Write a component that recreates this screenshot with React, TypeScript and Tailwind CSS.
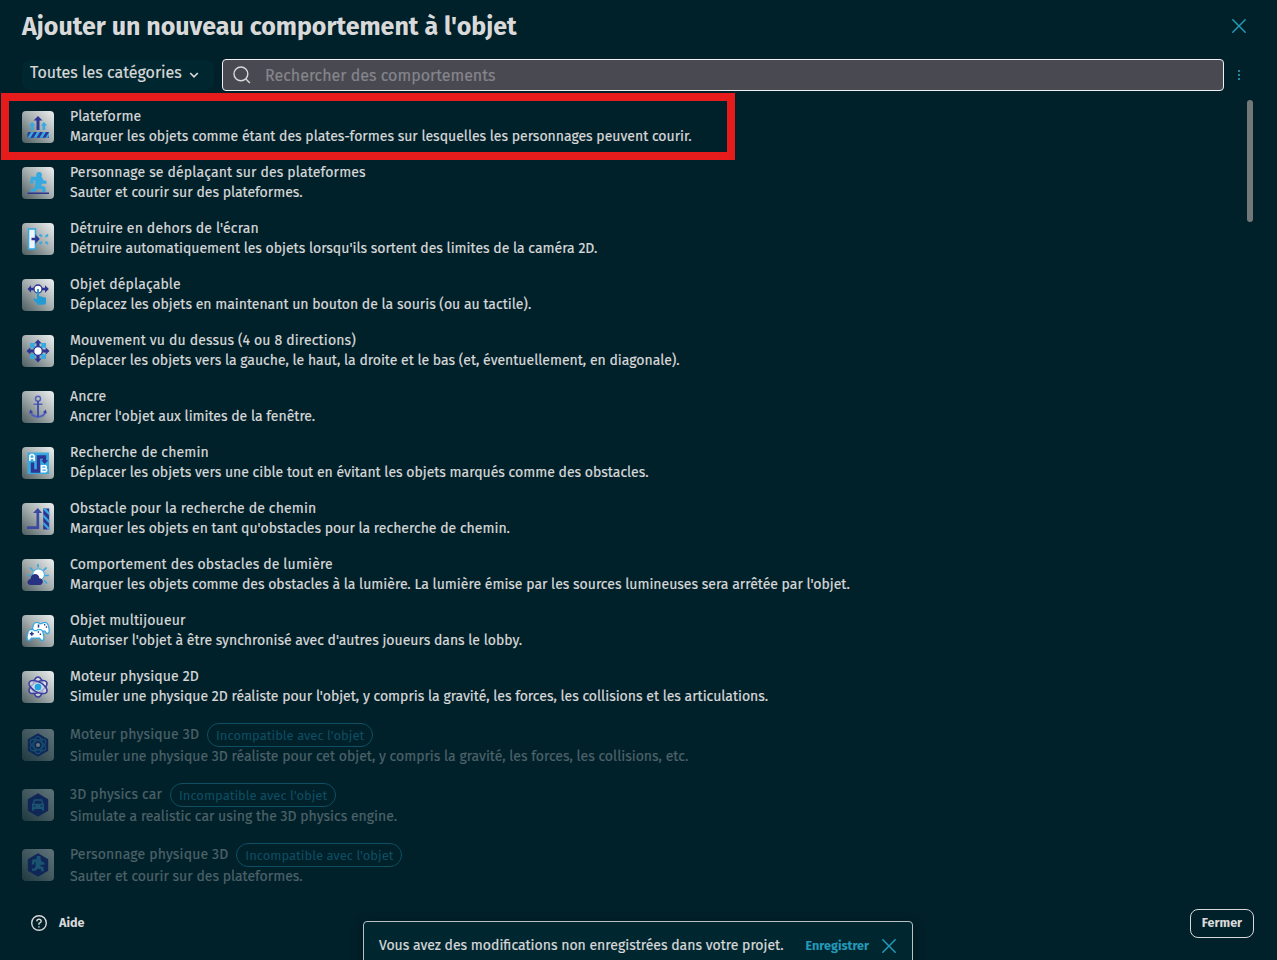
import type { ReactNode } from 'react';

const NAVY = '#2c3594';
const SKY = '#36a9e1';

type Behavior = {
  title: string;
  description: string;
  icon: ReactNode;
  incompatible?: boolean;
};

const platformIcon = (
  <>
    <path d="M14.500 19V9.500h-3L16 5l4.500 4.500h-3V19z" fill={NAVY} />
    <path d="M8.800 19v-4.500H6.800L10.200 11l3 3.500h-1.600V19zM20.500 19v-4.500h-1.600l3-3.500 3.300 3.500h-2V19z" fill={SKY} />
    <rect x="5.500" y="21" width="21.500" height="5.800" fill={NAVY} />
    <path d="M9 21h3l-3.500 5.800h-3zM15 21h3l-3.500 5.800h-3zM21 21h3l-3.500 5.800h-3zM27 21v4l-1 1.800h-2.500zM5.500 21h1l-1 2z" fill={SKY} />
  </>
);

const runner = (
  <>
    <circle cx="17" cy="8" r="2.900" />
    <path d="M9 9.700h10.500l2 3.500 3 .8v2.700h-4.700l-.5 2 4.200 1.300v5.300h-3.200v-2.700l-4.800-.600-2.500 2.700H8.500v-3H12l1.200-3.200v-5l-1.700-.3v3.200H8z" />
  </>
);

const characterIcon = (
  <>
    <g fill={SKY}>{runner}</g>
    <path d="M5.500 26.300h21.500" stroke={NAVY} strokeWidth="1.500" />
  </>
);

const destroyOutsideIcon = (
  <>
    <rect x="6.500" y="6" width="7" height="20" fill="#f2f3f6" stroke={SKY} strokeWidth="1.600" />
    <path d="M9.500 14.800h3.800v-3.500l4.400 4.700-4.400 4.700v-3.500H9.500z" fill={NAVY} />
    <path d="M17.500 11.500l2.500 2M17.500 21l2.500-2.200M26 11.500L23.500 14M26 21l-2.500-2.300" stroke={SKY} strokeWidth="2" />
  </>
);

const draggableIcon = (
  <>
    <path d="M5.500 10L9 6.200v2.500h14V6.200l3.800 3.800L23 13.800v-2.500H9v2.500z" fill={NAVY} />
    <circle cx="16" cy="10" r="4" fill="#fff" stroke={NAVY} strokeWidth="1.300" />
    <path d="M15 10.500q1-1.500 2 0V17l7 1.700v5.500l-1.500 1.600H16l-4.500-5v-1.600l3.500 1z" fill="#259bd3" />
  </>
);

const topDownIcon = (
  <>
    <path d="M8 8h6l-1.900 1.900 10 10L24 18v6h-6l1.900-1.900-10-10L8 14zM24 8v6l-1.900-1.900-10 10L14 24H8v-6l1.900 1.900 10-10L18 8z" fill={SKY} />
    <path d="M16 4.500l3.500 3.700h-2v6.300h6.300v-2l3.700 3.500-3.700 3.500v-2h-6.300v6.300h2L16 27.500l-3.500-3.700h2v-6.300H8.200v2L4.500 16l3.700-3.500v2h6.300V8.200h-2z" fill={NAVY} />
    <circle cx="16" cy="16" r="4.300" fill="#fff" stroke={NAVY} strokeWidth="1.300" />
  </>
);

const anchorIcon = (
  <>
    <g fill="none" stroke="#5360bd" strokeWidth="1.400">
      <circle cx="16" cy="7.800" r="2.500" />
      <path d="M11.500 13.200h9" />
      <path d="M8.700 21q.800 4.300 7.300 5 6.500-.700 7.300-5" strokeWidth="1.900" />
    </g>
    <path d="M15.100 10.300h1.800V26h-1.800z" fill="#3b4ca9" />
    <path d="M7.200 22.500l1-4 3 2.800zM24.800 22.500l-1-4-3 2.800z" fill="#3742a0" />
  </>
);

const pathfindingIcon = (
  <>
    <rect x="5.500" y="5.500" width="21.500" height="21.500" fill={SKY} />
    <path d="M10.500 15.500v8.500h6V10h6v4" fill="none" stroke={NAVY} strokeWidth="3.400" />
    <path d="M19 13.300h7.300L22.700 17z" fill={NAVY} />
    <path d="M7.800 14V9l1.200-1.500h2L12.200 9v5M8 11.500h4" fill="none" stroke="#fff" strokeWidth="1.600" />
    <path d="M19.500 18.800h3.800l.9.900v1l-.9.900h-3.100 3.400l1 .9v1.200l-1 .9h-4.100z" fill="none" stroke="#fff" strokeWidth="1.600" />
  </>
);

const obstacleIcon = (
  <>
    <path d="M5 24.700h10.800V8.500" fill="none" stroke="#3b49a0" strokeWidth="2.700" />
    <path d="M11 10l4.800-5 4.300 5z" fill="#3b49a0" />
    <rect x="21.200" y="5.500" width="6" height="21" fill={NAVY} />
    <path d="M21.200 5.500h2.500l3.500 3.700v3.200l-6-6zM21.200 11l6 6.200v3.200l-6-6.200zM21.200 18.500l6 6.100v1.900h-1.200l-4.800-5z" fill={SKY} />
  </>
);

const lightIcon = (
  <>
    <path d="M16 5v3.500M8 8.500l3 3M24.500 8.500l-3 3M5.500 16.500H9M23 16.500h4M22 21.500l3 3" stroke={SKY} strokeWidth="1.700" />
    <circle cx="16.500" cy="15.800" r="5.900" fill="#fff" stroke={SKY} strokeWidth="1" />
    <path d="M8 26q-3-.7-2.500-3.500Q6 20 8.500 20q.3-4.500 4.300-5 4.400.2 4.500 4.200 3.500.3 3.500 3.300 0 3.200-3.300 3.500z" fill="#293282" />
  </>
);

const gamepad = (
  <path
    d="M4.300 1.300h3l1 1h2.400l1-1h3Q16.500 1.500 17.500 6q1 5-.5 6-2 .8-3.500-2.200h-8Q4 12.800 2 12 .5 11 1.500 6 2.500 1.500 4.300 1.300z"
    fill="#fff"
    stroke={SKY}
    strokeWidth="1.300"
  />
);

const multiplayerIcon = (
  <>
    <g transform="translate(9.300 6.300)">{gamepad}</g>
    <path d="M16.500 9.500v3M22 9.800h1.300M23.800 12h1.300" stroke={NAVY} strokeWidth="1.500" />
    <g transform="translate(4 13.300)">{gamepad}</g>
    <path d="M9.800 16.700v4M7.800 18.700h4" stroke={NAVY} strokeWidth="1.500" />
    <path d="M15.700 17h1.400M17.700 19.200h1.400" stroke={NAVY} strokeWidth="1.500" />
  </>
);

const physicsIcon = (
  <>
    <g fill="#eef0f8" fillOpacity=".6" stroke="#3c3f9c" strokeWidth="1.500">
      <ellipse cx="16" cy="16" rx="5" ry="10" />
      <ellipse cx="16" cy="16" rx="5" ry="10" transform="rotate(60 16 16)" />
      <ellipse cx="16" cy="16" rx="5" ry="10" transform="rotate(120 16 16)" />
    </g>
    <circle cx="16" cy="16" r="3.500" fill="#22a5dd" />
  </>
);

const hexagon = <path d="M16 4.300l10.200 5.900v11.600L16 27.700 5.800 21.800V10.200z" fill="#24329b" />;

const physics3dIcon = (
  <>
    {hexagon}
    <g fill="none" stroke="#398fd0" strokeWidth="1.300">
      <ellipse cx="16" cy="16" rx="4.300" ry="8.700" />
      <ellipse cx="16" cy="16" rx="4.300" ry="8.700" transform="rotate(60 16 16)" />
      <ellipse cx="16" cy="16" rx="4.300" ry="8.700" transform="rotate(120 16 16)" />
    </g>
    <circle cx="16" cy="16" r="2" fill="#fff" />
  </>
);

const carIcon = (
  <>
    {hexagon}
    <path d="M12 10.300h8l1.200 4.200h.8v7h-2.200v-1.500h-7.600v1.500H10v-7h.8zM13 11.800l-.8 2.900h7.600l-.8-2.900zM11.500 16.500v1.200h2v-1.200zM18.500 16.500v1.200h2v-1.200z" fill="#459fdb" fillRule="evenodd" />
  </>
);

const character3dIcon = (
  <>
    {hexagon}
    <g fill="#459fdb" transform="translate(3.500 2.800) scale(.77)">{runner}</g>
  </>
);

const behaviors: Behavior[] = [
  { title: 'Plateforme', description: 'Marquer les objets comme étant des plates-formes sur lesquelles les personnages peuvent courir.', icon: platformIcon },
  { title: 'Personnage se déplaçant sur des plateformes', description: 'Sauter et courir sur des plateformes.', icon: characterIcon },
  { title: "Détruire en dehors de l'écran", description: "Détruire automatiquement les objets lorsqu'ils sortent des limites de la caméra 2D.", icon: destroyOutsideIcon },
  { title: 'Objet déplaçable', description: 'Déplacez les objets en maintenant un bouton de la souris (ou au tactile).', icon: draggableIcon },
  { title: 'Mouvement vu du dessus (4 ou 8 directions)', description: 'Déplacer les objets vers la gauche, le haut, la droite et le bas (et, éventuellement, en diagonale).', icon: topDownIcon },
  { title: 'Ancre', description: "Ancrer l'objet aux limites de la fenêtre.", icon: anchorIcon },
  { title: 'Recherche de chemin', description: 'Déplacer les objets vers une cible tout en évitant les objets marqués comme des obstacles.', icon: pathfindingIcon },
  { title: 'Obstacle pour la recherche de chemin', description: "Marquer les objets en tant qu'obstacles pour la recherche de chemin.", icon: obstacleIcon },
  { title: 'Comportement des obstacles de lumière', description: "Marquer les objets comme des obstacles à la lumière. La lumière émise par les sources lumineuses sera arrêtée par l'objet.", icon: lightIcon },
  { title: 'Objet multijoueur', description: "Autoriser l'objet à être synchronisé avec d'autres joueurs dans le lobby.", icon: multiplayerIcon },
  { title: 'Moteur physique 2D', description: "Simuler une physique 2D réaliste pour l'objet, y compris la gravité, les forces, les collisions et les articulations.", icon: physicsIcon },
  { title: 'Moteur physique 3D', description: 'Simuler une physique 3D réaliste pour cet objet, y compris la gravité, les forces, les collisions, etc.', icon: physics3dIcon, incompatible: true },
  { title: '3D physics car', description: 'Simulate a realistic car using the 3D physics engine.', icon: carIcon, incompatible: true },
  { title: 'Personnage physique 3D', description: 'Sauter et courir sur des plateformes.', icon: character3dIcon, incompatible: true },
];

function BehaviorRow({ title, description, icon, incompatible }: Behavior) {
  return (
    <li className="flex shrink-0 items-center gap-4 py-2">
      <div
        className={`size-8 shrink-0 overflow-hidden rounded-[4px] bg-linear-to-bl from-[#eef0f0] via-[#a5adae] to-[#4d5d60] ${incompatible ? 'opacity-40' : ''}`}
      >
        <svg viewBox="0 0 32 32" className="size-8">{icon}</svg>
      </div>
      <div className={`text-sm leading-5 whitespace-nowrap [-webkit-text-stroke:0.2px] ${incompatible ? 'text-[#4d6269]' : 'text-[#d9d9d9]'}`}>
        <div className="flex items-center gap-2">
          <span className="tracking-[0.15px]">{title}</span>
          {incompatible && (
            <span className="h-6 w-[166px] rounded-full border border-[#0e4f63] text-center text-[13px] leading-[23px] text-[#0e4f63] [-webkit-text-stroke:0px]">
              Incompatible avec l'objet
            </span>
          )}
        </div>
        <p>{description}</p>
      </div>
    </li>
  );
}

function Cross({ className }: { className: string }) {
  return (
    <svg viewBox="0 0 14 14" className={className} fill="none" stroke="currentColor" strokeWidth="1.500" strokeLinecap="round">
      <path d="M.800.800l12.400 12.400M13.200.800L.800 13.200" />
    </svg>
  );
}

export default function App() {
  return (
    <div className="relative flex h-[960px] w-[1277px] flex-col overflow-hidden bg-[#00202a] font-['Fira_Sans','Noto_Sans',sans-serif] text-[#d9d9d9]">
      <header className="flex h-[51px] shrink-0 items-center justify-between pr-[31px] pl-[22px]">
        <h1 className="pt-0.5 text-[25px] leading-8 font-bold">Ajouter un nouveau comportement à l'objet</h1>
        <button aria-label="Fermer la fenêtre">
          <Cross className="size-[14px] text-[#2399b8]" />
        </button>
      </header>

      <div className="flex h-12 shrink-0 items-center pl-[22px]">
        <button className="flex h-[30px] w-[192px] items-center gap-[7px] rounded-lg bg-[#002630] pb-[5px] pl-2 text-base leading-5 whitespace-nowrap [-webkit-text-stroke:0.2px]">
          Toutes les catégories
          <svg viewBox="0 0 10 6" className="mt-1 h-[6px] w-[10px]" fill="none" stroke="currentColor" strokeWidth="1.700">
            <path d="M1.200 1L5 4.800 8.800 1" />
          </svg>
        </button>
        <div className="ml-2 flex h-8 w-[1002px] items-center gap-3.5 rounded-[4px] border border-[#f0f0f5] bg-[#494952] pl-2.5">
          <svg viewBox="0 0 18 18" className="-mt-px size-[18px]" fill="none" stroke="#d9d9d9" strokeWidth="1.400">
            <circle cx="7.900" cy="7.900" r="6.900" />
            <path d="M12.900 12.900l4 4" />
          </svg>
          <span className="pt-0.5 text-base text-[#85858b] [-webkit-text-stroke:0.2px]">Rechercher des comportements</span>
        </div>
        <button aria-label="Options" className="ml-[14px] flex flex-col gap-0.5">
          <i className="size-0.5 bg-[#2286a2]" />
          <i className="size-0.5 bg-[#2286a2]" />
          <i className="size-0.5 bg-[#2286a2]" />
        </button>
      </div>

      <main className="flex h-[790px] shrink-0 justify-between overflow-hidden pr-6 pl-[22px]">
        <ul className="flex flex-col">
          {behaviors.map((behavior) => (
            <BehaviorRow key={behavior.title} {...behavior} />
          ))}
        </ul>
        <div className="mt-px h-[122px] w-1.5 rounded-full bg-[#747778]" />
      </main>

      <footer className="flex flex-1 items-start justify-between pt-5 pr-[23px] pl-[31px]">
        <button className="flex h-7 items-center gap-3 text-[12.600px] font-bold">
          <svg viewBox="0 0 16 16" className="size-4" fill="none" stroke="currentColor" strokeWidth="1.400">
            <circle cx="8" cy="8" r="7.300" />
            <path d="M5.800 6.400Q5.900 4.300 8 4.300t2.200 1.900Q10.200 7.300 8 8.300v1.400" />
            <circle cx="8" cy="11.900" r=".4" fill="currentColor" strokeWidth=".8" />
          </svg>
          Aide
        </button>
        <button className="h-[29px] w-16 rounded-lg border border-[#d9d9d9] pb-0.5 text-[12.600px] leading-[24px] font-bold">Fermer</button>
      </footer>

      <div className="absolute top-[93px] left-px h-[67px] w-[734px] border-8 border-[#e61c1c]" />

      <div className="absolute top-[921px] left-[363px] flex h-[50px] w-[550px] items-center rounded-[4px] border border-[#b9c1c3] bg-[#002630] pl-4 text-sm whitespace-nowrap shadow-[0_3px_12px_rgba(0,0,0,0.35)]">
        <span className="-ml-px [-webkit-text-stroke:0.2px]">Vous avez des modifications non enregistrées dans votre projet.</span>
        <button className="ml-[22px] text-[12.600px] font-bold text-[#2399b8]">Enregistrer</button>
        <button aria-label="Ignorer" className="ml-[13px]">
          <Cross className="size-[14px] text-[#2399b8]" />
        </button>
      </div>
    </div>
  );
}
